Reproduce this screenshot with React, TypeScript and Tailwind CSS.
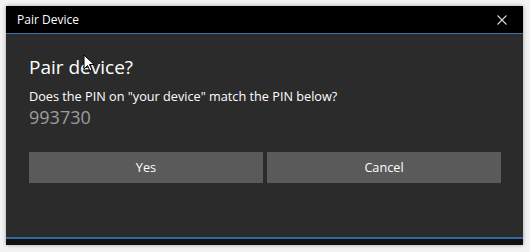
function Cursor() {
  return (
    <svg
      className="absolute left-[77px] top-[48px]"
      width="12"
      height="18"
      viewBox="0 0 12 18"
    >
      <path d="M1 1 L1 15 L4.5 11.5 L7 17 L9 16 L6.5 10.5 L11 10.5 Z" fill="#fff" stroke="#000" strokeWidth="1" />
    </svg>
  );
}

export default function App() {
  return (
    <div className="h-[252px] w-[530px] bg-[#f3f3f3] pl-[6px] pt-[6px] font-['Open_Sans','Noto_Sans',sans-serif]">
      <div className="relative flex h-[239px] w-[517px] flex-col bg-[#2b2b2b] shadow-[0_0_4px_rgba(0,0,0,0.35)]">
        <div className="flex h-[28px] items-center justify-between border-b border-[#3d6ea6] bg-black pl-[11px] pr-[16px]">
          <span className="text-[12px] text-white">Pair Device</span>
          <svg width="10" height="10" viewBox="0 0 10 10" className="text-[#d8d8d8]">
            <path d="M0.5 0.5 L9.5 9.5 M9.5 0.5 L0.5 9.5" stroke="currentColor" strokeWidth="1.1" />
          </svg>
        </div>
        <div className="flex flex-1 flex-col pl-[23px] pr-[22px] pt-[20px]">
          <h1 className="text-[19px] leading-[26px] text-white">Pair device?</h1>
          <p className="mt-[7px] text-[12.7px] leading-[18px] text-white">
            Does the PIN on "your device" match the PIN below?
          </p>
          <p className="text-[18px] leading-[24px] text-[#9d9d9d]">993730</p>
          <div className="mt-[23px] flex gap-[4px]">
            <button className="h-[31px] flex-1 bg-[#5a5a5a] text-[12.7px] text-white">Yes</button>
            <button className="h-[31px] flex-1 bg-[#5a5a5a] text-[12.7px] text-white">Cancel</button>
          </div>
        </div>
        <div className="h-[2px] bg-[#2f6aa3]" />
        <div className="h-[6px] bg-[#111]" />
        <Cursor />
      </div>
    </div>
  );
}
